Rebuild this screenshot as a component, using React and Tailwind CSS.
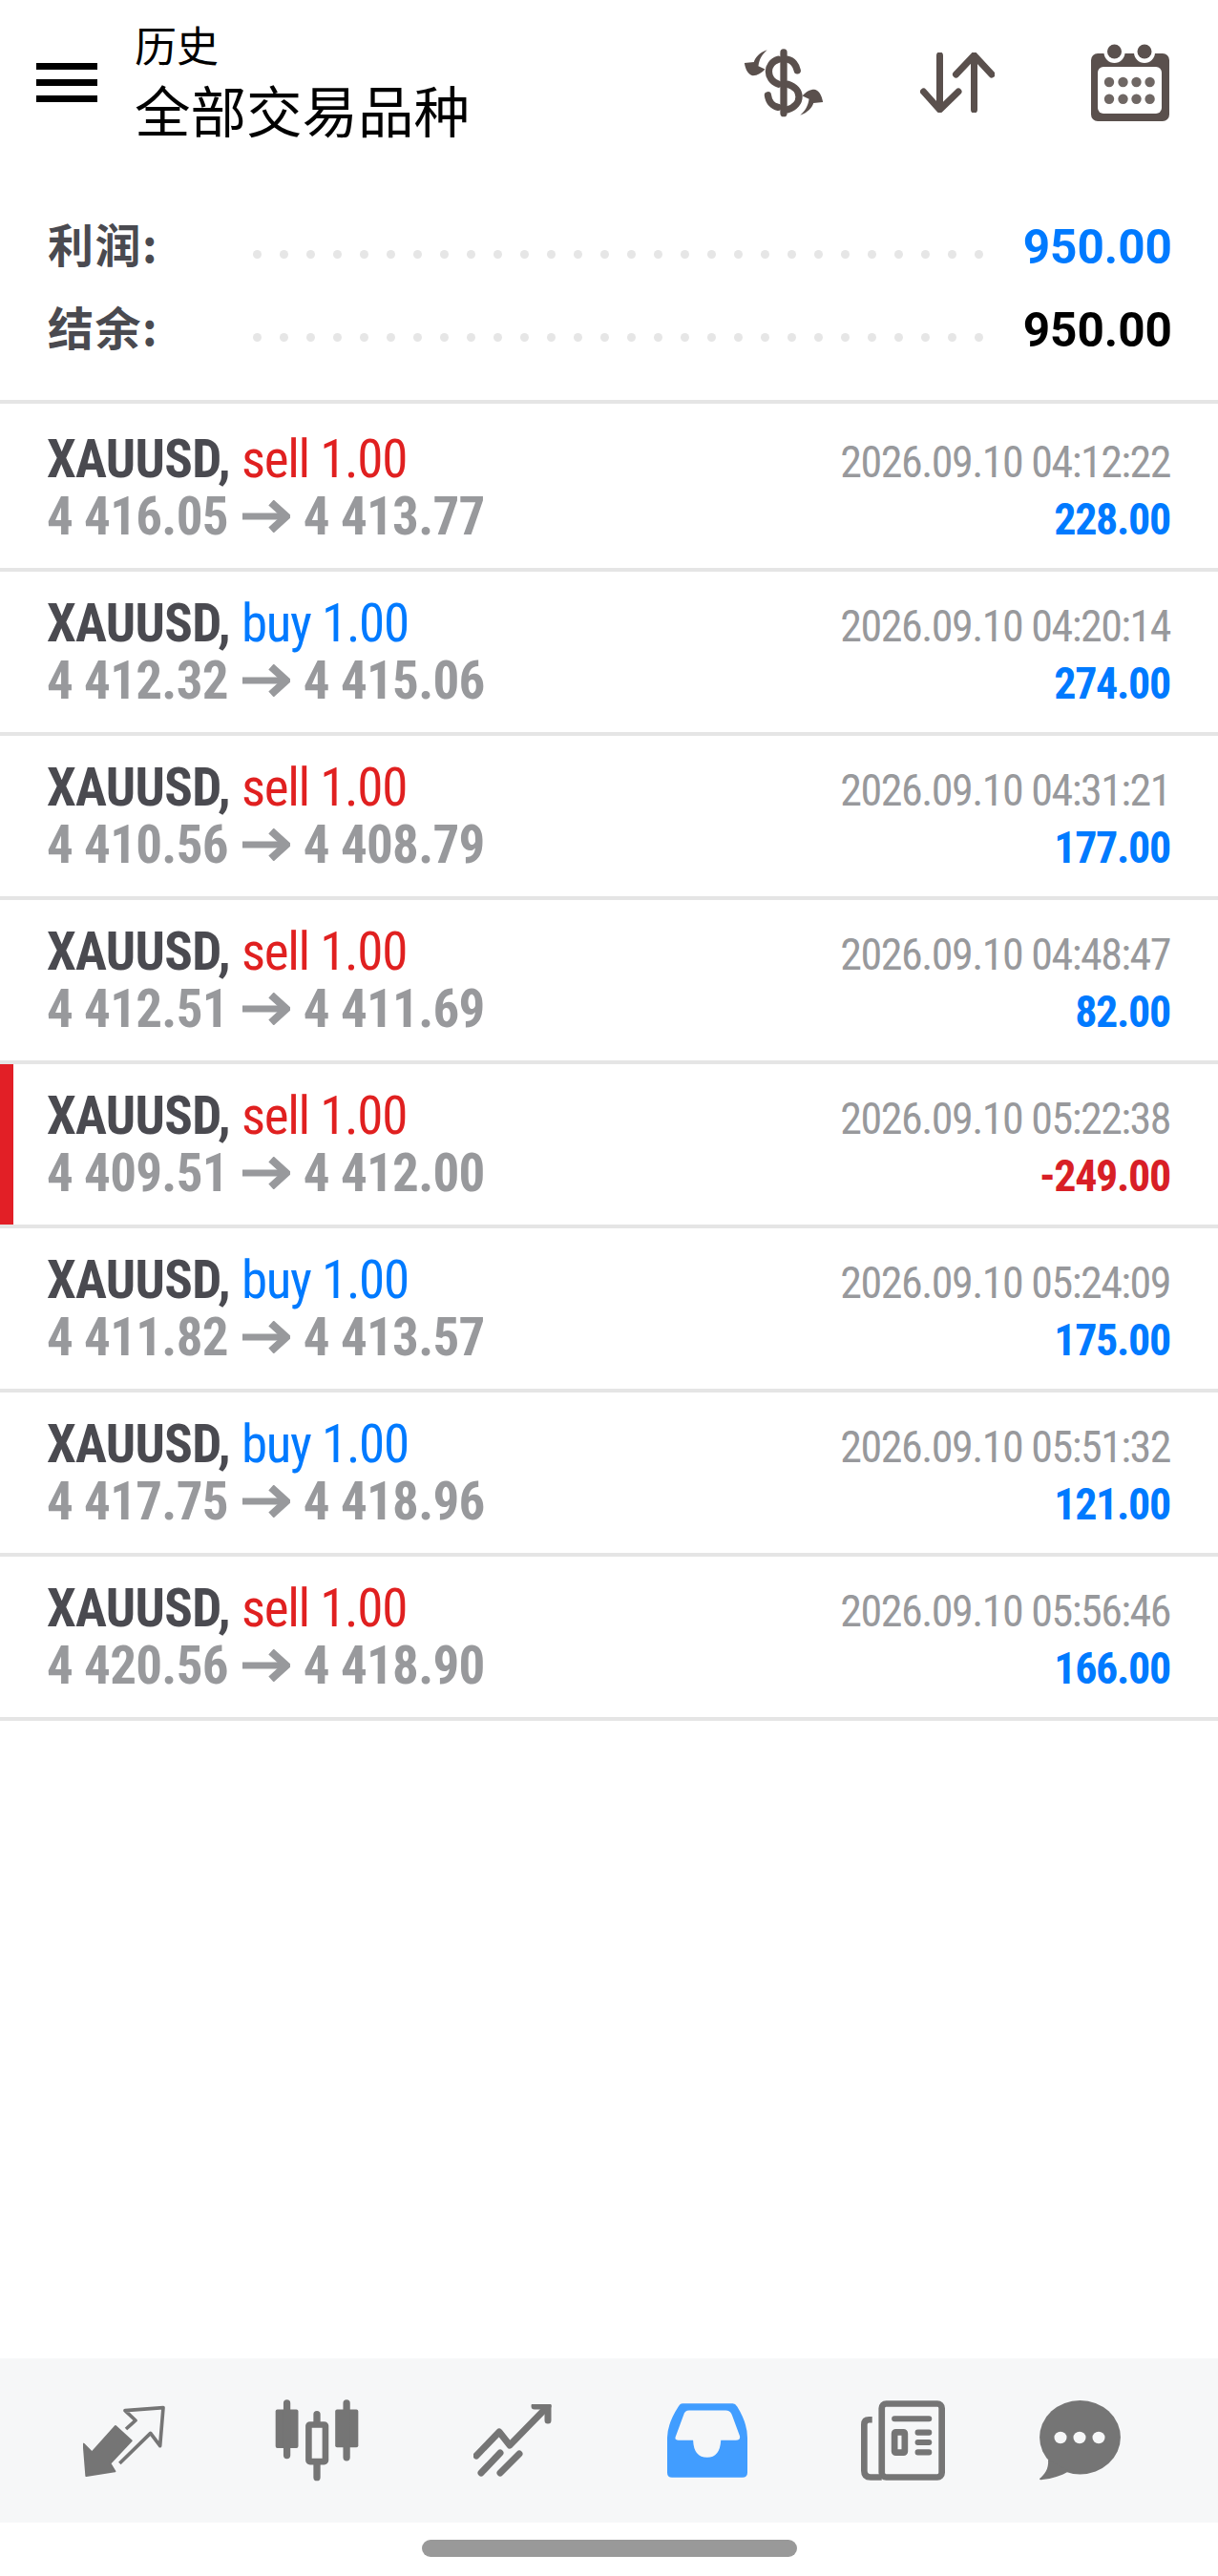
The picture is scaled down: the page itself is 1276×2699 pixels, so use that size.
const trades = [
  ["sell", "4 416.05", "4 413.77", "2026.09.10 04:12:22", "228.00"],
  ["buy", "4 412.32", "4 415.06", "2026.09.10 04:20:14", "274.00"],
  ["sell", "4 410.56", "4 408.79", "2026.09.10 04:31:21", "177.00"],
  ["sell", "4 412.51", "4 411.69", "2026.09.10 04:48:47", "82.00"],
  ["sell", "4 409.51", "4 412.00", "2026.09.10 05:22:38", "-249.00"],
  ["buy", "4 411.82", "4 413.57", "2026.09.10 05:24:09", "175.00"],
  ["buy", "4 417.75", "4 418.96", "2026.09.10 05:51:32", "121.00"],
  ["sell", "4 420.56", "4 418.90", "2026.09.10 05:56:46", "166.00"],
];

const dots = Array.from({ length: 28 });
const cjk = "font-['Noto_Sans_CJK_SC','Noto_Sans',sans-serif]";
const rob = "font-['Roboto','Noto_Sans_CJK_SC',sans-serif]";

function SummaryRow({ label, value, color }) {
  return (
    <div className="flex items-center h-[87px] pl-[50px] pr-[48px]">
      <div className={`${cjk} w-[215px] shrink-0 font-bold text-[48px] leading-none tracking-[1.5px] text-[#4a4a50] mb-[7px]`}>{label}:</div>
      <div className="flex gap-[19px] mt-[18px]">
        {dots.map((_, i) => (
          <span key={i} className="block w-[9px] h-[9px] rounded-full bg-[#e6e6e6]" />
        ))}
      </div>
      <div className={`${rob} ml-auto font-bold text-[49.5px] leading-none mt-[5px] ${color}`}>{value}</div>
    </div>
  );
}

function Row({ t, first }) {
  const [side, a, b, time, pl] = t;
  const loss = pl.startsWith("-");
  return (
    <div className={`relative flex justify-between border-b-4 border-[#e5e5e5] pl-[49px] pr-[50px] ${first ? "h-[176px] pt-[28px]" : "h-[172px] pt-[24px]"}`}>
      {loss && <div className="absolute left-0 top-0 bottom-0 w-[14px] bg-[#e21f26]" />}
      <div className={`${rob} [font-stretch:75%]`}>
        <div className="text-[55px] leading-[60px] whitespace-pre">
          <span className="font-bold text-[#4a4a50] tracking-[-0.7px]">XAUUSD, </span>
          <span className={`tracking-[-1.3px] ${side === "sell" ? "text-[#e02020]" : "text-[#007aff]"}`}>{side} 1.00</span>
        </div>
        <div className="h-[60px] text-[55px] leading-[60px] font-bold text-[#98999c] whitespace-pre tracking-[-0.7px]">
          {a}
          <svg className="inline ml-[15px] mr-[14px] w-[50px] h-[34px] align-[2px]" viewBox="0 0 50 34" fill="none" stroke="#98999c">
            <path d="M0 17H46" strokeWidth="7" />
            <path d="M30 2.5L46 17L30 31.5" strokeWidth="8" />
          </svg>
          {b}
        </div>
      </div>
      <div className={`${rob} [font-stretch:75%] text-right pt-[3px]`}>
        <div className="text-[46px] leading-[60px] text-[#98999c] tracking-[-1.5px]">{time}</div>
        <div className={`text-[46px] leading-[60px] font-bold tracking-[-1.3px] ${loss ? "text-[#d81f26]" : "text-[#007aff]"}`}>{pl}</div>
      </div>
    </div>
  );
}

export default function App() {
  return (
    <div className="w-[1276px] h-[2699px] flex flex-col bg-white overflow-hidden">
      <header className="h-[172px] flex items-center pl-[38px] pr-[51px]">
        <div className="flex flex-col gap-[10px] w-[64px]">
          <span className="block h-[7px] bg-black" />
          <span className="block h-[7px] bg-black" />
          <span className="block h-[7px] bg-black" />
        </div>
        <div className={`${cjk} ml-[39px] text-black mt-[10px]`}>
          <div className="text-[44px] leading-[46px]">历史</div>
          <div className="text-[58.5px] leading-[90px]">全部交易品种</div>
        </div>
        <svg className="ml-auto w-[90px] h-[73px]" viewBox="170 90 270 220">
          <g fill="none" stroke="#5a504d" strokeWidth="22" strokeLinecap="round">
            <path d="M302 105V297" />
            <path d="M285 127C245 140 245 190 285 205" />
            <path d="M315 127C330 130 342 145 345 162" />
            <path d="M315 205C362 220 362 270 315 285" />
            <path d="M252 240C255 262 268 275 284 278" />
          </g>
          <g fill="#5a504d">
            <path d="M250 97C225 105 212 122 208 135L178 138C182 160 190 175 205 178C220 178 232 170 243 158L222 148C225 125 235 110 250 97Z" />
            <path d="M250 97C225 105 212 122 208 135L178 138C182 160 190 175 205 178C220 178 232 170 243 158L222 148C225 125 235 110 250 97Z" transform="rotate(180 302 200)" />
          </g>
        </svg>
        <svg className="ml-[97px] w-[78px] h-[63px]" viewBox="0 0 78 63" fill="none" stroke="#5a504d" strokeWidth="7" strokeLinecap="round" strokeLinejoin="round">
          <path d="M20.5 3V59M3.5 41L20.5 60L40 41" />
          <path d="M56.5 3V60M37.5 23L56.5 3L75 23" />
        </svg>
        <svg className="ml-[101px] w-[82px] h-[81px]" viewBox="0 0 82 81">
          <rect x="0" y="10" width="82" height="71" rx="7" fill="#5a504d" />
          <rect x="7" y="24" width="67" height="49" rx="6" fill="#fff" />
          <circle cx="24.5" cy="9" r="11" fill="#fff" />
          <circle cx="56" cy="9" r="11" fill="#fff" />
          <circle cx="24.5" cy="8" r="7.5" fill="#5a504d" />
          <circle cx="56" cy="8" r="7.5" fill="#5a504d" />
          <g fill="#6f6764">
            <circle cx="19" cy="40" r="5.2" /><circle cx="33.5" cy="40" r="5.2" /><circle cx="47.5" cy="40" r="5.2" /><circle cx="61.6" cy="40" r="5.2" />
            <circle cx="19" cy="57.7" r="5.2" /><circle cx="33.5" cy="57.7" r="5.2" /><circle cx="47.5" cy="57.7" r="5.2" /><circle cx="61.6" cy="57.7" r="5.2" />
          </g>
        </svg>
      </header>

      <section className="pt-[42px] pb-[31px]">
        <SummaryRow label="利润" value="950.00" color="text-[#007aff]" />
        <SummaryRow label="结余" value="950.00" color="text-black" />
      </section>

      <main className="border-t-4 border-[#e5e5e5]">
        {trades.map((t, i) => (
          <Row key={i} t={t} first={i === 0} />
        ))}
      </main>

      <div className="mt-auto h-[172px] bg-[#f6f7f8] flex items-center">
        <svg className="ml-[87px] w-[86px] h-[75px]" viewBox="80 60 258 225">
          <path d="M182 126L232 172L165 243L180 268L90 282L82 182L108 208Z" fill="#757575" stroke="#757575" strokeWidth="6" strokeLinejoin="round" />
          <path d="M195 243L292 148L322 188L332 68L212 77L245 108L215 135" fill="none" stroke="#757575" strokeWidth="11" strokeLinejoin="round" />
        </svg>
        <svg className="ml-[115px] w-[88px] h-[86px]" viewBox="684 38 266 260">
          <rect x="686" y="70" width="72" height="122" rx="6" fill="#757575" />
          <rect x="875" y="70" width="73" height="120" rx="6" fill="#757575" />
          <rect x="791" y="118" width="53" height="117" rx="4" fill="none" stroke="#757575" strokeWidth="20" />
          <path d="M722 50V215M911 50V222M817 85V110M817 240V285" stroke="#757575" strokeWidth="22" strokeLinecap="round" />
        </svg>
        <svg className="ml-[120px] w-[82px] h-[76px]" viewBox="496 2519 82 76" fill="none" stroke="#757575" strokeWidth="7" strokeLinecap="round" strokeLinejoin="round">
          <path d="M499 2573L523 2548L534 2562L574 2521" />
          <path d="M560 2521H574V2536" />
          <path d="M504 2591L524 2570M524 2591L544 2571" />
        </svg>
        <svg className="ml-[121px] w-[84px] h-[78px]" viewBox="57 48 251 232">
          <path fillRule="evenodd" fill="#419dff" d="M105 48H262Q270 48 276 58Q308 110 308 155V265Q308 280 292 280H72Q57 280 57 265V155Q58 110 92 58Q97 48 105 48ZM125 70H240Q255 70 260 85L284 150Q287 163 272 163H225Q222 217 182 217Q140 217 138 163H92Q78 163 84 150L108 85Q112 70 125 70Z" />
        </svg>
        <svg className="ml-[119px] w-[88px] h-[84px]" viewBox="665 40 263 250">
          <rect x="730" y="50" width="188" height="230" rx="14" fill="none" stroke="#757575" strokeWidth="20" />
          <path d="M700 100H690Q675 100 675 115V260Q675 280 695 280H730" fill="none" stroke="#757575" strokeWidth="20" />
          <path d="M770 97H878M843 140H878M843 171H878M843 202H878" stroke="#757575" strokeWidth="18" strokeLinecap="round" />
          <rect x="770" y="139" width="32" height="64" rx="4" fill="none" stroke="#757575" strokeWidth="20" />
        </svg>
        <svg className="ml-[99px] w-[85px] h-[84px]" viewBox="1092 2513 85 84">
          <ellipse cx="1134.5" cy="2551.7" rx="42.4" ry="38.7" fill="#757575" />
          <path d="M1101 2575C1102 2585 1097 2591 1092 2595Q1092 2597 1095 2596C1105 2595 1115 2592 1123 2587Z" fill="#757575" />
          <ellipse cx="1114" cy="2552" rx="6.5" ry="6.2" fill="#f6f7f8" />
          <ellipse cx="1134" cy="2552" rx="6.5" ry="6.2" fill="#f6f7f8" />
          <ellipse cx="1154" cy="2552" rx="6.5" ry="6.2" fill="#f6f7f8" />
        </svg>
      </div>

      <div className="h-[56px] flex justify-center pt-[18px]">
        <div className="w-[393px] h-[18px] rounded-[9px] bg-[#999999]" />
      </div>
    </div>
  );
}
